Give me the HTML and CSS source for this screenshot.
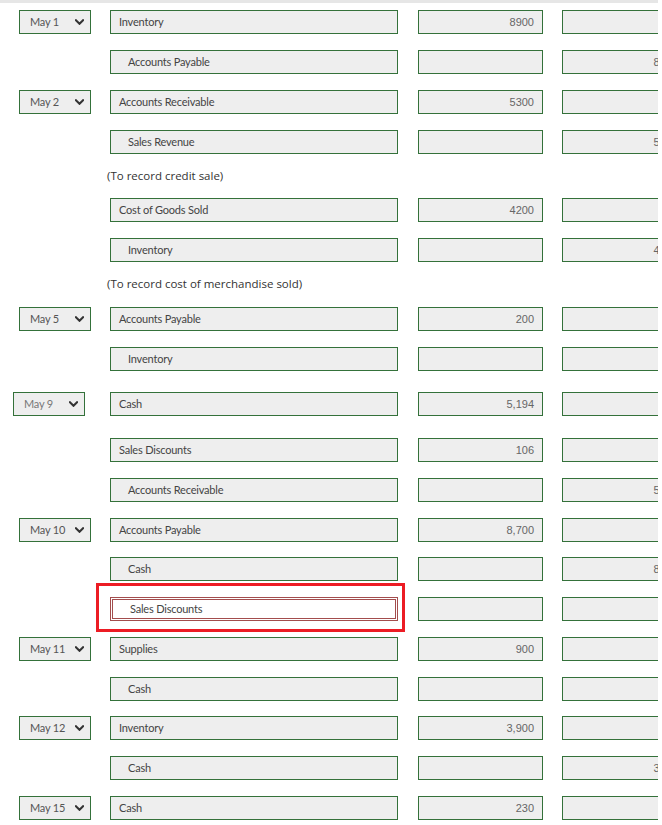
FILE: index.html
```html
<!DOCTYPE html>
<html>
<head>
<meta charset="utf-8">
<link rel="stylesheet" href="styles.css">
</head>
<body>
<div class="page">
  <div class="topband"></div>
  <div class="entries">
    <div class="row"><div class="date"><div class="select">May 1<svg class="chev" viewBox="0 0 10 6"><polyline points="1,1 5,5 9,1"/></svg></div></div><div class="acct">Inventory</div><div class="amt">8900</div><div class="amt"></div></div>
    <div class="row"><div class="date"></div><div class="acct cr">Accounts Payable</div><div class="amt"></div><div class="amt">8900</div></div>
    <div class="row"><div class="date"><div class="select">May 2<svg class="chev" viewBox="0 0 10 6"><polyline points="1,1 5,5 9,1"/></svg></div></div><div class="acct">Accounts Receivable</div><div class="amt">5300</div><div class="amt"></div></div>
    <div class="row"><div class="date"></div><div class="acct cr">Sales Revenue</div><div class="amt"></div><div class="amt">5300</div></div>
    <div class="note">(To record credit sale)</div>
    <div class="row"><div class="date"></div><div class="acct">Cost of Goods Sold</div><div class="amt">4200</div><div class="amt"></div></div>
    <div class="row"><div class="date"></div><div class="acct cr">Inventory</div><div class="amt"></div><div class="amt">4200</div></div>
    <div class="note">(To record cost of merchandise sold)</div>
    <div class="row plus1"><div class="date"><div class="select">May 5<svg class="chev" viewBox="0 0 10 6"><polyline points="1,1 5,5 9,1"/></svg></div></div><div class="acct">Accounts Payable</div><div class="amt">200</div><div class="amt"></div></div>
    <div class="row"><div class="date"></div><div class="acct cr">Inventory</div><div class="amt"></div><div class="amt">200</div></div>
    <div class="row gap21"><div class="date shifted"><div class="select faded">May 9<svg class="chev" viewBox="0 0 10 6"><polyline points="1,1 5,5 9,1"/></svg></div></div><div class="acct">Cash</div><div class="amt">5,194</div><div class="amt"></div></div>
    <div class="row gap22"><div class="date"></div><div class="acct">Sales Discounts</div><div class="amt">106</div><div class="amt"></div></div>
    <div class="row"><div class="date"></div><div class="acct cr">Accounts Receivable</div><div class="amt"></div><div class="amt">5300</div></div>
    <div class="row"><div class="date"><div class="select">May 10<svg class="chev" viewBox="0 0 10 6"><polyline points="1,1 5,5 9,1"/></svg></div></div><div class="acct">Accounts Payable</div><div class="amt">8,700</div><div class="amt"></div></div>
    <div class="row gap15"><div class="date"></div><div class="acct cr">Cash</div><div class="amt"></div><div class="amt">8526</div></div>
    <div class="row highlighted"><div class="date"></div><div class="acct cr wrong">Sales Discounts</div><div class="amt"></div><div class="amt">174</div><div class="redmark"></div></div>
    <div class="row"><div class="date"><div class="select">May 11<svg class="chev" viewBox="0 0 10 6"><polyline points="1,1 5,5 9,1"/></svg></div></div><div class="acct">Supplies</div><div class="amt">900</div><div class="amt"></div></div>
    <div class="row"><div class="date"></div><div class="acct cr">Cash</div><div class="amt"></div><div class="amt">900</div></div>
    <div class="row gap15"><div class="date"><div class="select">May 12<svg class="chev" viewBox="0 0 10 6"><polyline points="1,1 5,5 9,1"/></svg></div></div><div class="acct">Inventory</div><div class="amt">3,900</div><div class="amt"></div></div>
    <div class="row"><div class="date"></div><div class="acct cr">Cash</div><div class="amt"></div><div class="amt">3900</div></div>
    <div class="row"><div class="date"><div class="select">May 15<svg class="chev" viewBox="0 0 10 6"><polyline points="1,1 5,5 9,1"/></svg></div></div><div class="acct">Cash</div><div class="amt">230</div><div class="amt"></div></div>
  </div>
</div>
</body>
</html>
```
FILE: styles.css
```css
html, body {
  margin: 0;
  padding: 0;
  background: #ffffff;
}
.page {
  width: 658px;
  height: 825px;
  overflow: hidden;
  font-family: Lato, "Liberation Sans", sans-serif;
}
.topband {
  height: 3px;
  background: #e6e6e6;
}
.entries {
  padding-top: 7px;
  display: flex;
  flex-direction: column;
}
.row {
  position: relative;
  display: flex;
  height: 24px;
  margin-top: 16px;
  flex-shrink: 0;
}
.row:first-child { margin-top: 0; }
.row.plus1 { margin-top: 17px; }
.row.gap21 { margin-top: 21px; }
.row.gap22 { margin-top: 22px; }
.row.gap15 { margin-top: 15px; }
.date {
  width: 110px;
  flex-shrink: 0;
  padding-left: 19px;
  box-sizing: border-box;
}
.date.shifted { padding-left: 13px; }
.select {
  width: 72px;
  height: 24px;
  box-sizing: border-box;
  border: 1px solid #34713a;
  background: #eeeeee;
  display: flex;
  align-items: center;
  justify-content: space-between;
  padding: 0 6px 1px 10px;
  font-size: 11px;
  color: #555555;
  letter-spacing: -0.2px;
}
.select.faded { color: #777777; }
.chev {
  width: 9px;
  height: 6px;
  margin-top: 1px;
  fill: none;
  stroke: #333333;
  stroke-width: 2.3;
  stroke-linecap: square;
}
.acct {
  width: 288px;
  flex-shrink: 0;
  box-sizing: border-box;
  border: 1px solid #34713a;
  background: #eeeeee;
  display: flex;
  align-items: center;
  padding-left: 8px;
  padding-bottom: 1px;
  font-size: 11px;
  color: #444444;
  letter-spacing: -0.2px;
}
.acct.cr { padding-left: 17px; }
.acct.wrong {
  border: 1px solid #a34d4d;
  background: #ffffff;
  box-shadow: inset 0 0 0 1px #ffffff, inset 0 0 0 2px #a34d4d;
  padding-left: 19px;
}
.amt {
  width: 125px;
  flex-shrink: 0;
  margin-left: 20px;
  box-sizing: border-box;
  border: 1px solid #34713a;
  background: #eeeeee;
  display: flex;
  align-items: center;
  justify-content: flex-end;
  padding-right: 8px;
  font-family: "Liberation Sans", Arial, sans-serif;
  font-size: 11px;
  color: #666666;
}
.amt + .amt { margin-left: 19px; }
.note {
  margin-top: 16px;
  height: 12px;
  line-height: 12px;
  padding-left: 107px;
  font-family: "Open Sans", "DejaVu Sans", sans-serif;
  font-size: 11.5px;
  color: #333333;
  flex-shrink: 0;
}
.redmark {
  position: absolute;
  left: 96px;
  top: -14px;
  width: 309px;
  height: 49px;
  box-sizing: border-box;
  border: 3px solid #ec1c24;
  pointer-events: none;
}
```
